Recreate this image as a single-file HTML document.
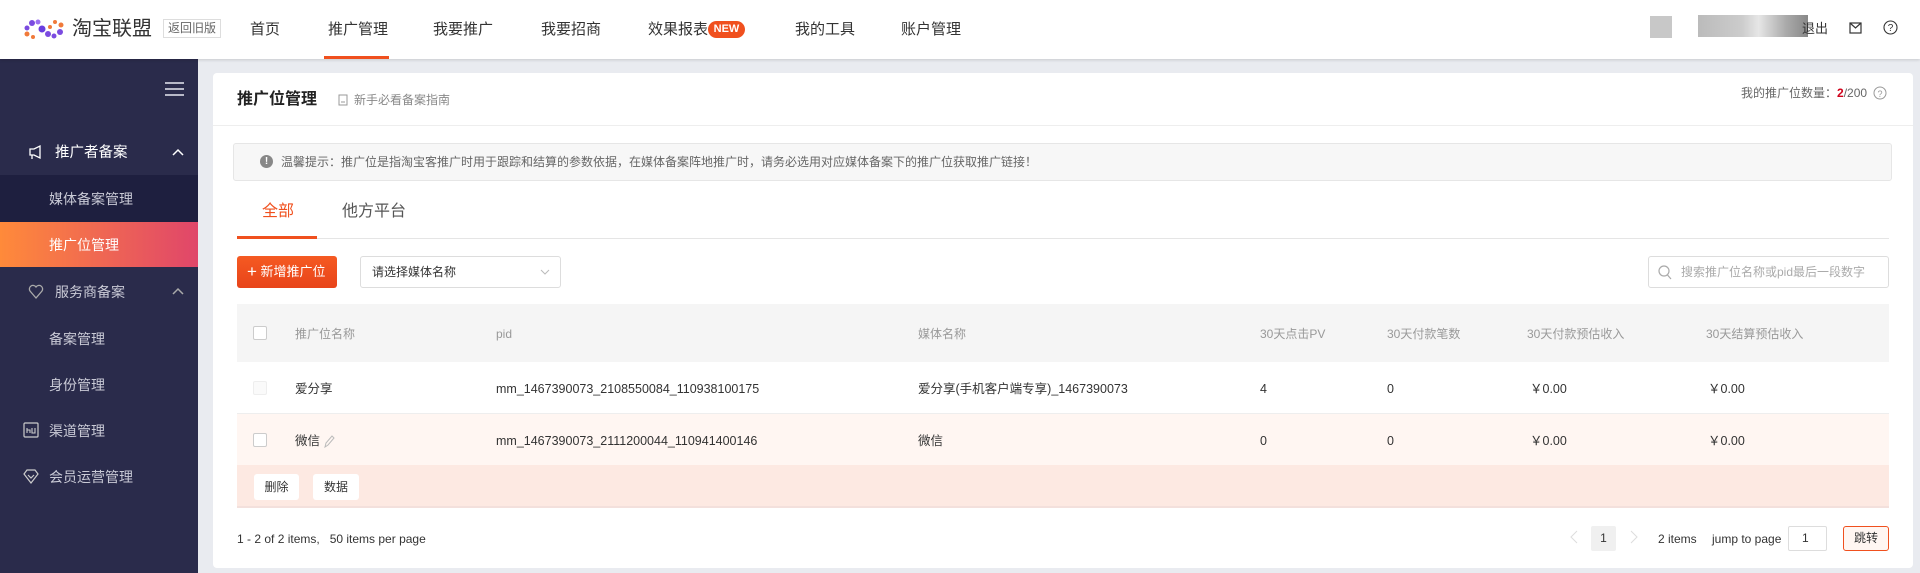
<!DOCTYPE html>
<html><head><meta charset="utf-8"><style>
*{margin:0;padding:0;box-sizing:border-box}
body{width:1920px;height:573px;overflow:hidden;background:#e9ebf0;font-family:"Liberation Sans","Noto Sans CJK SC",sans-serif;position:relative;color:#333;line-height:1.25}
.a{position:absolute;white-space:nowrap}
.hdr{position:absolute;left:0;top:0;width:1920px;height:59px;background:#fff;box-shadow:0 1px 3px rgba(0,0,0,.15);z-index:2}
.nav{font-size:15px;color:#333;top:20px;line-height:20px}
.side{position:absolute;left:0;top:59px;width:198px;height:514px;background:#2a2b4b}
.si{font-size:14px;color:#c9cad6;line-height:18px}
.card{position:absolute;left:213px;top:73px;width:1700px;height:495px;background:#fff;border-radius:4px}
.th{font-size:12px;color:#999;top:326px;line-height:16px}
.td{font-size:12.5px;color:#333;line-height:16px}
.cb{position:absolute;width:14px;height:14px;border:1px solid #ccc;border-radius:2px;background:#fff}
</style></head><body>
<div class="hdr">
<svg class="a" style="left:24px;top:18px" width="42" height="24" viewBox="0 0 42 24">
<circle cx="3" cy="10" r="2.5" fill="#7b4be0"/><circle cx="8" cy="5" r="3" fill="#7b4be0"/><circle cx="14" cy="4" r="2.5" fill="#9b6ff0"/><circle cx="18" cy="11" r="3.5" fill="#6a3ee0"/><circle cx="24" cy="16" r="3" fill="#7b4be0"/><circle cx="30" cy="18" r="2.5" fill="#7b4be0"/><circle cx="36" cy="14" r="3" fill="#7b4be0"/><circle cx="37" cy="7" r="2.5" fill="#f07a3a"/><circle cx="31" cy="4" r="2" fill="#f07a3a"/><circle cx="3" cy="16" r="2.5" fill="#f07a3a"/><circle cx="9" cy="19" r="2" fill="#f07a3a"/><circle cx="26" cy="9" r="2" fill="#f07a3a"/></svg>
<div class="a" style="left:72px;top:17px;font-size:20px;color:#333;line-height:24px">淘宝联盟</div>
<div class="a" style="left:163px;top:19px;font-size:12px;color:#666;border:1px solid #ddd;padding:0 4px;height:19px;line-height:17px">返回旧版</div>
<div class="a nav" style="left:250px">首页</div>
<div class="a nav" style="left:328px">推广管理</div>
<div class="a" style="left:324px;top:56px;width:65px;height:3px;background:#f0501e"></div>
<div class="a nav" style="left:433px">我要推广</div>
<div class="a nav" style="left:541px">我要招商</div>
<div class="a nav" style="left:648px">效果报表</div>
<div class="a" style="left:708px;top:21px;width:37px;height:17px;border-radius:9px;background:#f0501e;color:#fff;font-size:11px;font-weight:bold;text-align:center;line-height:17px">NEW</div>
<div class="a nav" style="left:795px">我的工具</div>
<div class="a nav" style="left:901px">账户管理</div>
<div class="a" style="left:1650px;top:16px;width:22px;height:22px;background:#c8c8c8"></div>
<div class="a" style="left:1698px;top:15px;width:110px;height:22px;background:linear-gradient(90deg,#bbb,#ccc 40%,#e6e6e6 55%,#aaa 80%,#888)"></div>
<div class="a" style="left:1802px;top:21px;font-size:13px;color:#333;line-height:16px">退出</div>
<svg class="a" style="left:1849px;top:22px" width="13" height="12" viewBox="0 0 13 12"><rect x="1" y="1" width="11" height="10" fill="none" stroke="#333" stroke-width="1.2"/><path d="M1 1l5.5 5 5.5-5" fill="none" stroke="#333" stroke-width="1.2"/></svg>
<svg class="a" style="left:1883px;top:20px" width="15" height="15" viewBox="0 0 15 15"><circle cx="7.5" cy="7.5" r="6.5" fill="none" stroke="#333" stroke-width="1.1"/><text x="7.5" y="11" font-size="10" text-anchor="middle" fill="#333" font-family="Liberation Sans">?</text></svg>
</div>
<div class="side">
<div class="a" style="left:165px;top:23px;width:19px;height:2px;background:#b8b9c8;box-shadow:0 6px 0 #b8b9c8,0 12px 0 #b8b9c8"></div>
<svg class="a" style="left:28px;top:85px" width="16" height="16" viewBox="0 0 16 16"><path d="M2 5h4l6-3v12l-6-3H2z M4 11v4" fill="none" stroke="#fff" stroke-width="1.3"/></svg>
<div class="a si" style="left:55px;top:85px;color:#fff;font-size:14.5px">推广者备案</div>
<svg class="a" style="left:172px;top:89px" width="12" height="8"><path d="M1 7l5-5 5 5" fill="none" stroke="#fff" stroke-width="1.5"/></svg>
<div class="a" style="left:0;top:116px;width:198px;height:47px;background:#1e1f3f"></div>
<div class="a si" style="left:49px;top:131px">媒体备案管理</div>
<div class="a" style="left:0;top:163px;width:198px;height:45px;background:linear-gradient(90deg,#ff8a3a,#e0466a)"></div>
<div class="a si" style="left:49px;top:177px;color:#fff">推广位管理</div>
<svg class="a" style="left:28px;top:224px" width="16" height="16" viewBox="0 0 16 16"><path d="M8 15L2 8a3.5 3.5 0 0 1 6-4 3.5 3.5 0 0 1 6 4z" fill="none" stroke="#aaa" stroke-width="1.3"/></svg>
<div class="a si" style="left:55px;top:224px">服务商备案</div>
<svg class="a" style="left:172px;top:228px" width="12" height="8"><path d="M1 7l5-5 5 5" fill="none" stroke="#aaa" stroke-width="1.5"/></svg>
<div class="a si" style="left:49px;top:271px">备案管理</div>
<div class="a si" style="left:49px;top:317px">身份管理</div>
<svg class="a" style="left:23px;top:363px" width="16" height="16" viewBox="0 0 16 16"><rect x="1" y="1" width="14" height="14" rx="1" fill="none" stroke="#ccc" stroke-width="1.2"/><path d="M4 11V6M4 8h3v3M9 6v5h3V6" fill="none" stroke="#ccc" stroke-width="1.1"/></svg>
<div class="a si" style="left:49px;top:363px">渠道管理</div>
<svg class="a" style="left:23px;top:409px" width="16" height="16" viewBox="0 0 16 16"><path d="M8 15L1 6l3-4h8l3 4z M5 7l3 3 3-3" fill="none" stroke="#ccc" stroke-width="1.2"/></svg>
<div class="a si" style="left:49px;top:409px">会员运营管理</div>
</div>
<div class="card"></div>
<div class="a" style="left:237px;top:90px;font-size:16px;font-weight:bold;color:#222;line-height:20px">推广位管理</div>
<svg class="a" style="left:338px;top:94px" width="10" height="12"><rect x="1" y="1" width="8" height="10" fill="none" stroke="#999"/><path d="M3 8h4" stroke="#999"/></svg>
<div class="a" style="left:354px;top:92px;font-size:12px;color:#888;line-height:16px">新手必看备案指南</div>
<div class="a" style="left:1741px;top:85px;font-size:12px;color:#666;line-height:16px">我的推广位数量：<b style="color:#d0021b">2</b>/200</div>
<svg class="a" style="left:1873px;top:86px" width="14" height="14"><circle cx="7" cy="7" r="6" fill="none" stroke="#999"/><text x="7" y="11" font-size="9" text-anchor="middle" fill="#999">?</text></svg>
<div class="a" style="left:213px;top:125px;width:1700px;height:1px;background:#eee"></div>
<div class="a" style="left:233px;top:143px;width:1659px;height:38px;background:#f7f7f7;border:1px solid #e6e6e6;border-radius:3px"></div>
<div class="a" style="left:260px;top:155px;width:13px;height:13px;border-radius:50%;background:#888;color:#fff;font-size:10px;font-weight:bold;text-align:center;line-height:13px">!</div>
<div class="a" style="left:281px;top:154px;font-size:12px;color:#666;line-height:16px">温馨提示：推广位是指淘宝客推广时用于跟踪和结算的参数依据，在媒体备案阵地推广时，请务必选用对应媒体备案下的推广位获取推广链接！</div>
<div class="a" style="left:262px;top:202px;font-size:16px;color:#f0501e;line-height:20px">全部</div>
<div class="a" style="left:342px;top:202px;font-size:16px;color:#555;line-height:20px">他方平台</div>
<div class="a" style="left:237px;top:238px;width:1652px;height:1px;background:#e5e5e5"></div>
<div class="a" style="left:237px;top:236px;width:80px;height:3px;background:#f0501e"></div>
<div class="a" style="left:237px;top:256px;width:100px;height:32px;background:linear-gradient(180deg,#f55a22,#e8441a);border-radius:3px;color:#fff;font-size:13px;line-height:32px;padding-left:10px"><span style="font-size:17px;vertical-align:-1px">+</span> 新增推广位</div>
<div class="a" style="left:360px;top:256px;width:201px;height:32px;border:1px solid #ddd;border-radius:3px;font-size:12px;color:#333;line-height:30px;padding-left:11px">请选择媒体名称<svg style="position:absolute;right:10px;top:12px" width="10" height="6"><path d="M1 1l4 4 4-4" fill="none" stroke="#bbb"/></svg></div>
<div class="a" style="left:1648px;top:256px;width:241px;height:32px;border:1px solid #ddd;border-radius:3px;font-size:12px;color:#aaa;line-height:30px;padding-left:32px">搜索推广位名称或pid最后一段数字<svg style="position:absolute;left:9px;top:8px" width="14" height="15"><circle cx="6" cy="6" r="5" fill="none" stroke="#aaa" stroke-width="1.2"/><path d="M9.5 10l3.5 4" stroke="#aaa" stroke-width="1.2"/></svg></div>
<div class="a" style="left:237px;top:304px;width:1652px;height:58px;background:#f5f5f5"></div>
<div class="a" style="left:237px;top:362px;width:1652px;height:52px;background:#fff;border-bottom:1px solid #eee"></div>
<div class="a" style="left:237px;top:414px;width:1652px;height:51px;background:#fff6f2"></div>
<div class="a" style="left:237px;top:465px;width:1652px;height:43px;background:#fde9e2;border-bottom:2px solid #f3e0dc"></div>
<div class="cb" style="left:253px;top:326px"></div>
<div class="cb" style="left:253px;top:381px;border-color:#eee;background:#fafafa"></div>
<div class="cb" style="left:253px;top:433px"></div>
<div class="a th" style="left:295px">推广位名称</div>
<div class="a th" style="left:496px">pid</div>
<div class="a th" style="left:918px">媒体名称</div>
<div class="a th" style="left:1260px">30天点击PV</div>
<div class="a th" style="left:1387px">30天付款笔数</div>
<div class="a th" style="left:1527px">30天付款预估收入</div>
<div class="a th" style="left:1706px">30天结算预估收入</div>
<div class="a td" style="left:295px;top:381px">爱分享</div>
<div class="a td" style="left:496px;top:381px">mm_1467390073_2108550084_110938100175</div>
<div class="a td" style="left:918px;top:381px">爱分享(手机客户端专享)_1467390073</div>
<div class="a td" style="left:1260px;top:381px">4</div>
<div class="a td" style="left:1387px;top:381px">0</div>
<div class="a td" style="left:1530px;top:381px">￥0.00</div>
<div class="a td" style="left:1708px;top:381px">￥0.00</div>
<div class="a td" style="left:295px;top:433px">微信</div>
<svg class="a" style="left:323px;top:434px" width="12" height="14"><path d="M2 13l1-4 6-7 2 2-6 7z" fill="none" stroke="#bbb"/></svg>
<div class="a td" style="left:496px;top:433px">mm_1467390073_2111200044_110941400146</div>
<div class="a td" style="left:918px;top:433px">微信</div>
<div class="a td" style="left:1260px;top:433px">0</div>
<div class="a td" style="left:1387px;top:433px">0</div>
<div class="a td" style="left:1530px;top:433px">￥0.00</div>
<div class="a td" style="left:1708px;top:433px">￥0.00</div>
<div class="a" style="left:254px;top:474px;width:45px;height:26px;background:#fff;border-radius:3px;font-size:12px;text-align:center;line-height:26px">删除</div>
<div class="a" style="left:313px;top:474px;width:46px;height:26px;background:#fff;border-radius:3px;font-size:12px;text-align:center;line-height:26px">数据</div>
<div class="a" style="left:237px;top:531px;font-size:12px;color:#333;line-height:16px">1 - 2 of 2 items,&nbsp;&nbsp;&nbsp;50 items per page</div>
<svg class="a" style="left:1570px;top:530px" width="8" height="14"><path d="M7 1L1 7l6 6" fill="none" stroke="#ddd"/></svg>
<div class="a" style="left:1591px;top:526px;width:25px;height:25px;background:#f0f0f0;border-radius:2px;font-size:12px;text-align:center;line-height:25px">1</div>
<svg class="a" style="left:1630px;top:530px" width="8" height="14"><path d="M1 1l6 6-6 6" fill="none" stroke="#ddd"/></svg>
<div class="a" style="left:1658px;top:531px;font-size:12px;color:#333;line-height:16px">2 items</div>
<div class="a" style="left:1712px;top:531px;font-size:12px;color:#333;line-height:16px">jump to page</div>
<div class="a" style="left:1788px;top:526px;width:39px;height:25px;border:1px solid #ddd;border-radius:2px;font-size:12px;line-height:23px;padding-left:13px">1</div>
<div class="a" style="left:1843px;top:526px;width:46px;height:25px;border:1px solid #f0501e;border-radius:3px;background:#fff6f2;font-size:12px;text-align:center;line-height:23px">跳转</div>
</body></html>
